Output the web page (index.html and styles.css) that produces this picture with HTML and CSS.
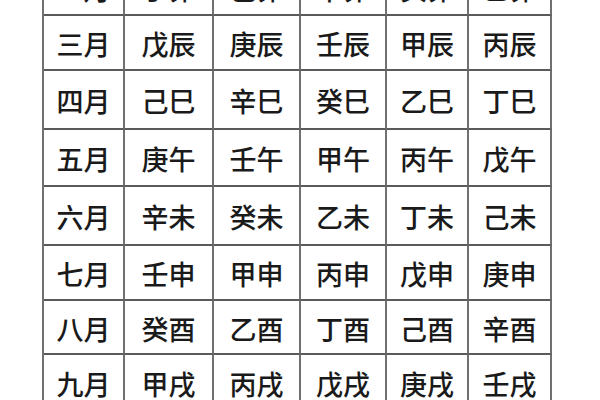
FILE: index.html
```html
<!DOCTYPE html>
<html lang="zh-CN">
<head>
<meta charset="utf-8">
<title>月柱表</title>
<link rel="stylesheet" href="styles.css">
</head>
<body>
<div class="table">
  <div class="cell">二月</div><div class="cell">丁卯</div><div class="cell">己卯</div><div class="cell">辛卯</div><div class="cell">癸卯</div><div class="cell">乙卯</div>
  <div class="cell">三月</div><div class="cell">戊辰</div><div class="cell">庚辰</div><div class="cell">壬辰</div><div class="cell">甲辰</div><div class="cell">丙辰</div>
  <div class="cell">四月</div><div class="cell">己巳</div><div class="cell">辛巳</div><div class="cell">癸巳</div><div class="cell">乙巳</div><div class="cell">丁巳</div>
  <div class="cell">五月</div><div class="cell">庚午</div><div class="cell">壬午</div><div class="cell">甲午</div><div class="cell">丙午</div><div class="cell">戊午</div>
  <div class="cell">六月</div><div class="cell">辛未</div><div class="cell">癸未</div><div class="cell">乙未</div><div class="cell">丁未</div><div class="cell">己未</div>
  <div class="cell">七月</div><div class="cell">壬申</div><div class="cell">甲申</div><div class="cell">丙申</div><div class="cell">戊申</div><div class="cell">庚申</div>
  <div class="cell">八月</div><div class="cell">癸酉</div><div class="cell">乙酉</div><div class="cell">丁酉</div><div class="cell">己酉</div><div class="cell">辛酉</div>
  <div class="cell">九月</div><div class="cell">甲戌</div><div class="cell">丙戌</div><div class="cell">戊戌</div><div class="cell">庚戌</div><div class="cell">壬戌</div>
</div>
</body>
</html>
```
FILE: styles.css
```css
html, body {
  margin: 0;
  padding: 0;
  background: #ffffff;
  overflow: hidden;
}
body {
  width: 600px;
  height: 400px;
}
.table {
  display: grid;
  width: max-content;
  margin-left: 42px;
  margin-top: -42px;
  grid-template-columns: 81px 89px 87px 86px 82px 83px;
  grid-template-rows: 56px 55px 59px 57px 59px 55px 54px 56px;
  border-left: 2px solid #707070;
  border-top: 2px solid #707070;
}
.cell {
  box-sizing: border-box;
  border-right: 2px solid #707070;
  border-bottom: 2px solid #5a5a5a;
  display: flex;
  align-items: center;
  justify-content: center;
  font-family: "Noto Sans CJK SC", "Noto Sans", sans-serif;
  font-size: 27px;
  font-weight: 500;
  line-height: 1;
  color: #1a1a1a;
  padding-top: 2px;
}
```
